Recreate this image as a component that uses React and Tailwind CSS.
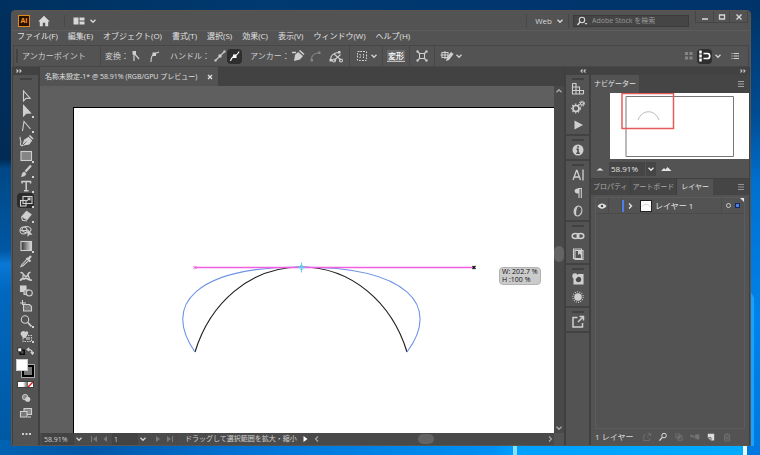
import clsx from 'clsx';

const menus = [
  'ファイル(F)',
  '編集(E)',
  'オブジェクト(O)',
  '書式(T)',
  '選択(S)',
  '効果(C)',
  '表示(V)',
  'ウィンドウ(W)',
  'ヘルプ(H)',
];

const Icon = ({ children, className = 'w-4 h-3.5', box = '0 0 16 14' }) => (
  <svg viewBox={box} className={clsx('block shrink-0', className)} fill="none" stroke="currentColor" strokeWidth="1.1" aria-hidden="true">
    {children}
  </svg>
);

const Chevron = ({ up }) => (
  <Icon box="0 0 8 8" className="w-2 h-2">
    <path d={up ? 'M1.5 5.2 4 2.8l2.5 2.4' : 'M1.5 2.8 4 5.2l2.5-2.4'} strokeWidth="1.4" />
  </Icon>
);

const Lines = () => (
  <Icon box="0 0 8 8" className="w-2 h-2">
    <path d="M1 1.5h6M1 4h6M1 6.5h6" strokeWidth="0.8" />
  </Icon>
);

const Divider = () => <div className="w-px self-stretch bg-[#484848] shrink-0" />;

const Grip = () => <div className="w-3 h-0.5 mx-auto bg-[#414141]" />;

const tools = [
  { label: '選択ツール', art: <path d="M5.5 2v10l2.6-2.6 4-.2z" /> },
  { label: 'ダイレクト選択ツール', more: true, art: <path d="M5.5 1.5v10.5l2.7-2.8 4.3-.2z" fill="currentColor" /> },
  { label: 'アンカーポイントツール', more: true, art: <path d="M4.5 12 6 2.5l6.5 7.5" /> },
  {
    label: '曲線ツール',
    art: (
      <>
        <path d="M2.5 3c-2 2 2 4 0 6.5-.5 1 .5 2.5 2.5 2" />
        <path d="m5 11 1.5-5 4-2.5 3 3-2.5 3.5z" fill="currentColor" />
        <path d="m11.5 1.5 3.5 3.5" strokeWidth="1.6" />
        <path d="m5 11 3.5-3.5" stroke="#535353" strokeWidth="0.8" />
      </>
    ),
  },
  { label: '長方形ツール', more: true, art: <rect x="3" y="2.5" width="10.5" height="9" fill="#858585" /> },
  {
    label: 'ブラシツール',
    more: true,
    art: (
      <>
        <path d="m7.5 7.5 5.5-6" strokeWidth="2.2" />
        <path d="M3 12.5c1.5-.5.5-4 3-4.5 1.5 0 2.5 1.5 1.5 3-1 1.3-3 1.5-4.5 1.5z" fill="currentColor" strokeWidth="0.5" />
      </>
    ),
  },
  {
    label: '文字ツール',
    more: true,
    art: <path d="M4 4.5V2.5h8.5v2M8.2 2.5v9M6 11.7h4.5" strokeWidth="1.5" />,
  },
  {
    label: '拡大・縮小ツール',
    more: true,
    active: true,
    art: (
      <>
        <rect x="2.5" y="6.5" width="5.5" height="5.5" />
        <rect x="5" y="2.5" width="9" height="7" />
        <path d="m8.5 7 3.5-3M9.5 4h2.5v2.5" />
      </>
    ),
  },
  {
    label: '消しゴムツール',
    more: true,
    art: (
      <>
        <path d="m3.5 7.5 5-5.5 5 3.5-4.5 5.5z" fill="currentColor" strokeWidth="0.6" />
        <path d="m3.5 8 1 3.2 4.5.8" />
      </>
    ),
  },
  {
    label: 'シェイプ形成ツール',
    art: (
      <>
        <circle cx="5.5" cy="6.5" r="3.5" />
        <ellipse cx="8.5" cy="5.5" rx="4.5" ry="3" />
        <path d="M2.5 6.5h7" />
        <path d="M9.5 5v8l2-2.2 3-.1z" fill="currentColor" stroke="none" />
      </>
    ),
  },
  { label: 'グラデーションツール', more: true, art: <rect x="3" y="2.5" width="10.5" height="9" fill="url(#toolGradient)" /> },
  {
    label: 'スポイトツール',
    art: (
      <>
        <path d="m8.5 4 4 3.5M10 5.5l3-3.5" strokeWidth="2.2" />
        <path d="M9 5 4 10.5l-1 2 2-.8 5.5-5" />
      </>
    ),
  },
  {
    label: 'パペットワープツール',
    art: (
      <>
        <path d="M2.5 4c2.5-2 3 3.5 5.5 3.5s1.5-5 4.5-4" strokeWidth="1.5" />
        <path d="M2.5 12c.5-4 3-1 4.5-2.5 1.5-1.5 3 2.5 7 1.5" strokeWidth="1.8" />
        <path d="M5 6v3.5M10 6l1.5 4" strokeWidth="1.3" />
      </>
    ),
  },
  {
    label: 'ブレンドツール',
    art: (
      <>
        <rect x="2.5" y="2" width="5.5" height="5.5" fill="currentColor" />
        <path d="M6 6h4.5v4.5H6z" fill="#8a8a8a" />
        <circle cx="11.3" cy="9" r="3" fill="#535353" />
      </>
    ),
  },
  {
    label: 'アートボードツール',
    art: (
      <>
        <path d="M4.5 1v5M2 4h6" />
        <path d="M5.5 5.5h6l2 2v4.5h-8z" fill="#777" />
      </>
    ),
  },
  {
    label: 'ズームツール',
    more: true,
    art: (
      <>
        <circle cx="7" cy="5.5" r="3.7" />
        <path d="m9.8 8.5 3.7 4" strokeWidth="1.8" />
      </>
    ),
  },
  {
    label: 'シンボルツール',
    more: true,
    art: (
      <>
        <path d="M5 6.5h8.5v6H5z" strokeDasharray="1.5 1" />
        <path d="M2.5 5c0-3 4-4 4.5-2 2-2 4 0 3 2l-2.5 4H5z" fill="currentColor" stroke="none" />
        <path d="M8 8h4v3H8z" fill="#999" stroke="none" />
      </>
    ),
  },
];

const dockGroups = [
  [
    {
      label: 'スウォッチ',
      art: <path d="M2.5 1.5h3.5v10.5M2.5 1.5V12h11M2.5 5h7v7M2.5 8.5h11V12M9.5 8.5V5" />,
    },
    {
      label: 'ブラシ設定',
      art: (
        <>
          <circle cx="6" cy="8.5" r="3" strokeWidth="1.7" />
          <circle cx="6" cy="8.5" r="4.3" strokeDasharray="1.5 1.6" strokeWidth="1.2" />
          <circle cx="12" cy="3.5" r="1.5" strokeWidth="1.2" />
          <circle cx="12" cy="3.5" r="2.5" strokeDasharray="1 1" />
        </>
      ),
    },
    { label: 'アクション', art: <path d="M4.5 2.5v9l8.5-4.5z" fill="currentColor" stroke="none" /> },
  ],
  [
    {
      label: '情報',
      art: (
        <>
          <circle cx="8" cy="7" r="5.5" fill="currentColor" stroke="none" />
          <path d="M8 3v1.7M6.5 6.2H8v4M6.3 10.3h3.5" stroke="#4b4b4b" strokeWidth="1.6" />
        </>
      ),
    },
  ],
  [
    { label: '文字', art: <path d="M3 12 6.5 2.5h.5L10.5 12M4.3 9h5M13 1.5v11" strokeWidth="1.3" /> },
    {
      label: '段落',
      art: (
        <>
          <path d="M9 2.5v9.5M11.3 2.5v9.5M12 2.5H8" />
          <path d="M9 2.5H7.5c-3.8 0-3.8 5 0 5H9z" fill="currentColor" stroke="none" />
        </>
      ),
    },
    {
      label: 'OpenType',
      art: (
        <>
          <ellipse cx="8" cy="7" rx="3.8" ry="5" transform="rotate(15 8 7)" />
          <path d="M8 2C4 3 3 10.5 6.5 12c-.8-3-.3-7 1.5-10z" fill="currentColor" stroke="none" />
        </>
      ),
    },
  ],
  [
    {
      label: 'リンク',
      art: (
        <>
          <ellipse cx="5.5" cy="7" rx="3.3" ry="2.5" strokeWidth="1.5" />
          <ellipse cx="10.5" cy="7" rx="3.3" ry="2.5" strokeWidth="1.5" />
        </>
      ),
    },
    {
      label: 'CC ライブラリ',
      art: (
        <>
          <path d="M3.5 2h8v9.5h-8zM5 3.5h8V12.5H5z" />
          <path d="M8 3h3v5L9.5 6.8 8 8z" fill="currentColor" stroke="none" />
        </>
      ),
    },
  ],
  [
    {
      label: '透明',
      art: (
        <>
          <path d="M4 6v6h9V2.5H8" fill="currentColor" />
          <circle cx="8.5" cy="7.5" r="2.7" fill="#4b4b4b" stroke="none" />
          <circle cx="5" cy="4" r="2.7" fill="currentColor" stroke="none" />
        </>
      ),
    },
    {
      label: 'アピアランス',
      art: (
        <>
          <circle cx="8" cy="7" r="3.8" fill="currentColor" stroke="none" />
          <circle cx="8" cy="7" r="5.2" strokeDasharray="1 1.3" />
        </>
      ),
    },
  ],
  [
    {
      label: 'アセットの書き出し',
      art: <path d="M7.5 2.5H3v9.5h9.5V8M8 7l5-5M9.5 1.5H13.5v4" strokeWidth="1.5" />,
    },
  ],
];

const layerActions = [
  { label: 'アセットの書き出し', art: <path d="M6 4H3.5v8h8V9M8 7l4.5-4.5M9 2h4v4" /> },
  {
    label: 'オブジェクトの位置',
    on: true,
    art: (
      <>
        <circle cx="9.5" cy="5" r="3.2" strokeWidth="1.4" />
        <path d="m7 7.5-4 4.5" strokeWidth="1.8" />
      </>
    ),
  },
  { label: 'クリッピングマスクを作成', art: <path d="M3.5 2.5h6v6h-6zM6.5 5.5h6v6h-6zM6.5 5.5h3v3h-3z" /> },
  { label: '新規サブレイヤーを作成', art: <path d="M2 3.5v3h5M5 4.5l2 2-2 2M8.5 4h5v6l-5-1z" fill="currentColor" /> },
  {
    label: '新規レイヤーを作成',
    on: true,
    art: (
      <>
        <path d="M3.5 2.5h9v9.5H8L3.5 8z" fill="currentColor" stroke="none" />
        <path d="M4 8h4v3.5" stroke="#4b4b4b" />
      </>
    ),
  },
  { label: '削除', art: <path d="M3.5 4h9M6.5 4V2.5h3V4M4.5 4v8.5h7V4M6.5 6v4.5M8 6v4.5M9.5 6v4.5" /> },
];

const Wallpaper = () => (
  <svg className="absolute inset-0 w-full h-full" viewBox="0 0 760 455" preserveAspectRatio="none" aria-hidden="true">
    <defs>
      <linearGradient id="skyLeft" x1="0" y1="0" x2="0" y2="1">
        <stop offset="0" stopColor="#00305f" />
        <stop offset="0.35" stopColor="#002b55" />
        <stop offset="0.37" stopColor="#004886" />
        <stop offset="0.55" stopColor="#0057a3" />
        <stop offset="0.58" stopColor="#0a78d6" />
        <stop offset="0.64" stopColor="#0068c0" />
        <stop offset="1" stopColor="#0057a0" />
      </linearGradient>
      <linearGradient id="skyRight" x1="0" y1="0" x2="0" y2="1">
        <stop offset="0" stopColor="#003263" />
        <stop offset="0.25" stopColor="#004c92" />
        <stop offset="0.4" stopColor="#0070cf" />
        <stop offset="0.7" stopColor="#0082ea" />
        <stop offset="1" stopColor="#0078e0" />
      </linearGradient>
      <linearGradient id="skyTop">
        <stop offset="0" stopColor="#00305f" />
        <stop offset="0.35" stopColor="#003a70" />
        <stop offset="1" stopColor="#00336a" />
      </linearGradient>
      <linearGradient id="skyBottom">
        <stop offset="0" stopColor="#0062b2" />
        <stop offset="0.12" stopColor="#0057a8" />
        <stop offset="0.3" stopColor="#0070d2" />
        <stop offset="0.66" stopColor="#0090f5" />
        <stop offset="0.69" stopColor="#00a0ff" />
        <stop offset="0.97" stopColor="#00aaff" />
      </linearGradient>
    </defs>
    <rect width="380" height="455" fill="url(#skyLeft)" />
    <rect x="380" width="380" height="455" fill="url(#skyRight)" />
    <rect width="760" height="11" fill="url(#skyTop)" />
    <rect y="440" width="745" height="15" fill="url(#skyBottom)" />
    <rect x="513" y="440" width="4" height="15" fill="#8be0ff" />
    <rect x="743" y="440" width="4" height="15" fill="#e8fbff" />
    <path d="M751 292l3 6v148h-3z" fill="#14a4ff" />
  </svg>
);

const TitleBar = () => (
  <header className="flex items-center h-[19px] pl-1.5 text-[#d8d8d8]">
    <div className="flex items-center justify-center w-3 h-3 bg-[#2a1200] border border-[#e08a1e] text-[#f59a23] text-[7px] leading-none font-bold">
      Ai
    </div>
    <button type="button" aria-label="ホーム" className="ml-2">
      <Icon className="w-3 h-3" box="0 0 12 12">
        <path d="M6 .8.2 6.5h1.6v4.8h3V7.8h2.4v3.5h3V6.5h1.6z" fill="currentColor" stroke="none" />
      </Icon>
    </button>
    <div className="w-px h-3 ml-3.5 bg-[#484848]" />
    <button type="button" aria-label="ドキュメントの配置" className="flex items-center gap-1 ml-2">
      <Icon className="w-3 h-3" box="0 0 12 12">
        <path d="M.5 2.5h5v7h-5zM6.5 2.5h5v3h-5zM6.5 6.5h5v3h-5z" fill="currentColor" stroke="none" />
      </Icon>
      <Chevron />
    </button>
    <div className="flex-1" />
    <div className="w-px h-3.5 bg-[#484848]" />
    <button type="button" className="flex items-center gap-1 pl-2 pr-1 text-[8px] leading-3">
      Web
      <Chevron />
    </button>
    <div className="w-px h-3.5 bg-[#484848]" />
    <label className="flex items-center w-[116px] h-3 ml-1 pl-0.5 gap-1 bg-[#454545] border border-[#3b3b3b]">
      <Icon className="w-3 h-2.5" box="0 0 12 10">
        <circle cx="6" cy="4" r="2.7" />
        <path d="M4 6 1.5 9" strokeWidth="1.4" />
        <path d="M8.5 7h3L10 8.7z" fill="currentColor" stroke="none" />
      </Icon>
      <input
        aria-label="Adobe Stock を検索"
        placeholder="Adobe Stock を検索"
        className="w-full min-w-0 bg-transparent text-[7px] leading-[10px] outline-none placeholder:text-[#999]"
      />
    </label>
    <div className="flex self-start h-3 ml-1.5 mr-0.5 border border-t-0 border-[#464646]">
      <button type="button" aria-label="最小化" className="w-[17px] flex items-center justify-center">
        <Icon box="0 0 8 8" className="w-2 h-2"><path d="M1 6h6" strokeWidth="1.5" /></Icon>
      </button>
      <button type="button" aria-label="最大化" className="w-[17px] flex items-center justify-center border-x border-[#464646]">
        <Icon box="0 0 8 8" className="w-2 h-2"><path d="M1.5 2h5v4h-5z" strokeWidth="1.3" /></Icon>
      </button>
      <button type="button" aria-label="閉じる" className="w-[17px] flex items-center justify-center">
        <Icon box="0 0 8 8" className="w-2 h-2"><path d="m1.5 1.5 5 5m0-5-5 5" strokeWidth="1.4" /></Icon>
      </button>
    </div>
  </header>
);

const MenuBar = () => (
  <nav className="flex items-center h-[15px] pl-[5px] pb-1 gap-2.5 border-t border-[#5d5d5d] text-[8px] leading-3 text-[#e2e2e2]">
    {menus.map((menu) => (
      <button key={menu} type="button" className="shrink-0">
        {menu}
      </button>
    ))}
  </nav>
);

const ToolButton = ({ label, active, children, className = 'w-[15px]' }) => (
  <button
    type="button"
    aria-label={label}
    className={clsx('flex items-center justify-center h-[15px] shrink-0', className, active && 'bg-[#2e2e2e] rounded-sm text-white')}
  >
    {children}
  </button>
);

const ControlBar = () => (
  <div className="flex items-center h-[22px] mx-px px-0.5 border border-[#474747] text-[8px] leading-3 text-[#cfcfcf]">
    <div className="w-0.5 h-3.5 bg-[#434343]" />
    <span className="ml-1 w-[78px] shrink-0">アンカーポイント</span>
    <Divider />
    <span className="ml-1 w-6 shrink-0">変換：</span>
    <ToolButton label="コーナーポイントに切り換え">
      <Icon>
        <path d="M5 4v8M5 4l5 6" strokeWidth="1.2" />
        <path d="M3.5 2h3.5v3.5H3.5z" fill="currentColor" stroke="none" />
      </Icon>
    </ToolButton>
    <ToolButton label="スムーズポイントに切り換え" className="w-[22px]">
      <Icon>
        <path d="M4 13c0-4 1-7 3-8l5-2" />
        <path d="M5.5 3.5H9V7H5.5z" fill="currentColor" stroke="none" />
      </Icon>
    </ToolButton>
    <span className="ml-1 w-[42px] shrink-0">ハンドル：</span>
    <ToolButton label="ハンドルを表示">
      <Icon>
        <path d="m3.5 11.5 9-9" />
        <path d="M6.5 5.5h3v3h-3zM2.5 10.5h2v2h-2zM11.5 1.5h2v2h-2z" fill="currentColor" stroke="none" />
      </Icon>
    </ToolButton>
    <ToolButton label="ハンドルを隠す" active>
      <Icon>
        <path d="M3.5 12c.5-2.5 2-4 4-5s4-2 4.5-4.5" />
        <path d="M6 5.5h3.5V9H6z" fill="currentColor" stroke="none" />
      </Icon>
    </ToolButton>
    <span className="ml-2 w-10 shrink-0">アンカー：</span>
    <ToolButton label="アンカーポイントを削除">
      <Icon>
        <path d="m4 12 1-6 3-3 5 4-3 3.5z" fill="currentColor" stroke="none" />
        <path d="m9.5 1.5 4.5 4M2 3.5h4" strokeWidth="1.6" />
      </Icon>
    </ToolButton>
    <ToolButton label="アンカーポイントを連結" className="w-[22px] text-[#858585]">
      <Icon>
        <path d="M3.5 10.5c0-4 2-6 6.5-6.5" />
        <path d="M2.5 10h2.5v2.5H2.5zM10 2.5h2.5V5H10z" fill="currentColor" stroke="none" />
      </Icon>
    </ToolButton>
    <ToolButton label="アンカーポイントでパスをカット" className="w-[18px]">
      <Icon>
        <path d="M2.5 11c0-4 3-7 8-7.5M6 5l7 6M12.5 5.5 6 11.5" />
        <circle cx="13" cy="11.5" r="1.5" />
        <circle cx="6" cy="11.5" r="1.5" />
        <path d="M1.5 10H4v2.5H1.5zM10 2h2.5v2.5H10z" fill="currentColor" stroke="none" />
      </Icon>
    </ToolButton>
    <div className="w-1" />
    <Divider />
    <ToolButton label="整列" className="w-8">
      <Icon>
        <path d="M3.5 2.5h9v9h-9z" strokeDasharray="1.5 1.5" />
        <path d="M6 2v10M3 7h10M9.5 2v10" strokeDasharray="1 2" />
      </Icon>
      <Chevron />
    </ToolButton>
    <Divider />
    <button type="button" className="mx-1 px-px h-3 bg-[#686868] shrink-0 font-medium text-white border-b border-[#bdbdbd]">変形</button>
    <Divider />
    <ToolButton label="選択オブジェクトを編集モードで分離" className="w-6">
      <Icon>
        <path d="M5.5 4.5h5v5h-5zM3 2l3 3m7-3-3 3M3 12l3-3m7 3-3-3" />
        <path d="M2.5 1.5h2v2h-2zM11.5 1.5h2v2h-2zM2.5 10.5h2v2h-2zM11.5 10.5h2v2h-2z" fill="currentColor" stroke="none" />
      </Icon>
    </ToolButton>
    <Divider />
    <ToolButton label="共通オブジェクトを選択" className="w-8">
      <Icon>
        <path d="M3 3.5h6v5H3zM6 2v8M1.5 6H9" />
        <path d="m7 12 1-4 4-5 2.5 2L10 11z" fill="currentColor" stroke="none" />
      </Icon>
      <Chevron />
    </ToolButton>
    <div className="flex-1" />
    <ToolButton label="ピクセルグリッドに整合" className="w-4 text-[#858585]">
      <Icon>
        <path d="M4.5 3.5h2v2h-2zM9 3.5h2v2H9zM4.5 8h2v2h-2zM9 8h2v2H9z" fill="currentColor" />
      </Icon>
    </ToolButton>
    <ToolButton label="スナップ" active>
      <Icon>
        <path d="M3.5 1.5v11" strokeWidth="2.5" strokeDasharray="3 1" />
        <path d="M6.5 4.5h4c3 0 3 5 0 5h-4" strokeWidth="1.7" />
      </Icon>
    </ToolButton>
    <ToolButton label="スナップのオプション" className="w-3">
      <Chevron />
    </ToolButton>
    <ToolButton label="コントロールのメニュー" className="w-[22px]">
      <Icon className="w-2.5 h-2.5" box="0 0 10 10">
        <path d="M3.5 2.5H9M3.5 5H9M3.5 7.5H9M1.5 2.5h1M1.5 5h1M1.5 7.5h1" />
      </Icon>
    </ToolButton>
  </div>
);

const DoubleArrow = ({ left }) => (
  <Icon box="0 0 8 6" className="w-2 h-1.5">
    <path d={left ? 'M3.5 1.5 2 3l1.5 1.5M6.5 1.5 5 3l1.5 1.5' : 'M1.5 1.5 3 3 1.5 4.5M4.5 1.5 6 3 4.5 4.5'} />
  </Icon>
);

const Toolbar = () => (
  <aside className="flex flex-col w-[25px] shrink-0 bg-[#535353] text-[#cfcfcf]">
    <button type="button" aria-label="ツールバーを展開" className="flex items-center h-2 pl-0.5 bg-[#424242]">
      <DoubleArrow />
    </button>
    <div className="pt-[3px] pb-2">
      <Grip />
    </div>
    <div className="flex flex-col items-center">
      {tools.map((tool) => (
        <button
          key={tool.label}
          type="button"
          aria-label={tool.label}
          className={clsx('relative flex items-center justify-center w-[17px] h-[15px]', tool.active && 'bg-[#2b2b2b] rounded-sm')}
        >
          <Icon>{tool.art}</Icon>
          {tool.more && <span className="absolute right-0 bottom-0 w-0.5 h-0.5 bg-[#d0d0d0]" />}
        </button>
      ))}
    </div>
    <div className="flex justify-between px-1 pt-1">
      <button type="button" aria-label="初期設定の塗りと線">
        <Icon box="0 0 10 10" className="w-2 h-2">
          <path d="M4 4h5v5H4z" stroke="#111" strokeWidth="2" />
          <path d="M1 1h5v5H1z" fill="#fff" stroke="#222" />
        </Icon>
      </button>
      <button type="button" aria-label="塗りと線を入れ替え">
        <Icon box="0 0 10 10" className="w-2 h-2">
          <path d="M2 3c4 0 6 2 6 5M4 1 1.5 3 4 5M6 6.5 8 9l2-2.5" strokeWidth="1.5" />
        </Icon>
      </button>
    </div>
    <div className="relative h-[18px] mx-[3px] mt-1">
      <button type="button" aria-label="線" className="absolute left-1.5 top-1.5 w-3 h-3 border-2 border-black outline outline-[#aaa] bg-[#777]" />
      <button type="button" aria-label="塗り" className="absolute left-0 top-0 w-3 h-3 bg-white border border-[#ccc]" />
    </div>
    <div className="flex mx-1 mt-1 h-[7px] border border-[#404040]">
      <button type="button" aria-label="カラー" className="flex-1 bg-white" />
      <button type="button" aria-label="グラデーション" className="flex-1 bg-linear-to-r from-white to-[#555]" />
      <button type="button" aria-label="なし" className="flex-1 bg-white">
        <svg viewBox="0 0 6 6" className="w-full h-full block" preserveAspectRatio="none">
          <path d="M0 6 6 0" stroke="#e01a1a" strokeWidth="1.8" />
        </svg>
      </button>
    </div>
    <button type="button" aria-label="描画方法" className="mx-auto mt-1">
      <Icon className="w-3 h-3" box="0 0 14 14">
        <circle cx="6" cy="6" r="3.2" fill="#888" />
        <circle cx="9" cy="8.5" r="3" fill="currentColor" stroke="none" />
      </Icon>
    </button>
    <button type="button" aria-label="スクリーンモードを変更" className="mx-auto mt-0.5">
      <Icon>
        <path d="M6 2.5h7.5v6H6z" fill="#888" />
        <path d="M2.5 5.5H9v5.5H2.5z" fill="#777" />
        <path d="M10 11h3" />
      </Icon>
    </button>
    <button type="button" aria-label="ツールバーを編集" className="mx-auto mt-auto pb-1">
      <Icon>
        <path d="M4 7h2M7.5 7h2M11 7h2" strokeWidth="1.8" />
      </Icon>
    </button>
  </aside>
);

const Artwork = () => (
  <svg className="block max-w-none w-[480px] h-[325px]" viewBox="74 108 480 325" fill="none">
    <path d="M195 352C210 303 250 267 301 267s91 36 106 85" stroke="#222" strokeWidth="1.2" />
    <path d="M195 352C162 305 195 267 301 267s141 38 106 85" stroke="#6f94e4" strokeWidth="1.1" />
    <path d="M195 267.5H474" stroke="#f25fe2" strokeWidth="1.3" />
    <path d="m193.5 266 3 3m0-3-3 3" stroke="#f05adc" />
    <path d="m472.5 266 3 3m0-3-3 3" stroke="#111" strokeWidth="1.3" />
    <path d="M301.5 262.5v10M298 267.5h7" stroke="#5fd0f5" />
    <path d="m301.5 264.5 2.5 3-2.5 3-2.5-3z" stroke="#5fd0f5" strokeWidth="0.8" />
  </svg>
);

const StatusBar = () => (
  <footer className="flex items-center h-3 text-[7px] leading-[10px] text-[#cfcfcf] bg-[#4b4b4b]">
    <input aria-label="ズーム" defaultValue="58.91%" className="w-8 h-full ml-0.5 pl-0.5 bg-[#434343] outline-none" />
    <button type="button" aria-label="ズームの一覧" className="flex justify-center w-2.5"><Chevron /></button>
    <div className="flex gap-1 pl-1.5 w-7 text-[#7a7a7a]">
      <button type="button" aria-label="最初">
        <Icon box="0 0 8 8" className="w-2 h-2"><path d="M1.5 1v6" /><path d="M7 1v6L3 4z" fill="currentColor" stroke="none" /></Icon>
      </button>
      <button type="button" aria-label="前へ">
        <Icon box="0 0 8 8" className="w-2 h-2"><path d="M5 1v6L1.5 4z" fill="currentColor" stroke="none" /></Icon>
      </button>
    </div>
    <input aria-label="アートボード" defaultValue="1" className="w-[26px] h-full pl-0.5 bg-[#434343] outline-none" />
    <button type="button" aria-label="アートボードの一覧" className="flex justify-center w-2.5"><Chevron /></button>
    <div className="flex gap-1 pl-1.5 w-7 text-[#7a7a7a]">
      <button type="button" aria-label="次へ">
        <Icon box="0 0 8 8" className="w-2 h-2"><path d="M2 1v6l4-3z" fill="currentColor" stroke="none" /></Icon>
      </button>
      <button type="button" aria-label="最後">
        <Icon box="0 0 8 8" className="w-2 h-2"><path d="M6.5 1v6" /><path d="M1 1v6l4-3z" fill="currentColor" stroke="none" /></Icon>
      </button>
    </div>
    <Divider />
    <span className="pl-2 w-[124px] shrink-0 whitespace-nowrap">ドラッグして選択範囲を拡大・縮小</span>
    <button type="button" aria-label="ステータスの一覧" className="text-white">
      <Icon box="0 0 8 8" className="w-2 h-2"><path d="M2.5 1v6l4-3z" fill="currentColor" stroke="none" /></Icon>
    </button>
    <div className="flex flex-1 items-center justify-between h-full pl-1 bg-[#494949] text-[#aaa]">
      <button type="button" aria-label="左へスクロール">
        <Icon box="0 0 8 8" className="w-2 h-2"><path d="M5 1.5 2.5 4 5 6.5" /></Icon>
      </button>
      <div className="w-4 h-2.5 mr-4 rounded-full bg-[#646464]" />
      <button type="button" aria-label="右へスクロール">
        <Icon box="0 0 8 8" className="w-2 h-2"><path d="M3 1.5 5.5 4 3 6.5" /></Icon>
      </button>
    </div>
    <div className="w-2.5 h-full bg-[#535353]" />
  </footer>
);

const Document = () => (
  <main className="flex flex-col flex-1 min-w-0">
    <div className="flex h-[19px] bg-[#424242]">
      <div className="flex items-center justify-between w-[178px] pl-[5px] pr-1 bg-[#535353] text-[7px] leading-3 text-[#e0e0e0]">
        <span className="whitespace-nowrap">名称未設定-1* @ 58.91% (RGB/GPU プレビュー)</span>
        <button type="button" aria-label="タブを閉じる">
          <Icon box="0 0 8 8" className="w-2 h-2"><path d="m2 2 4 4m0-4L2 6" strokeWidth="1.3" /></Icon>
        </button>
      </div>
    </div>
    <div className="flex flex-1 min-h-0">
      <div className="relative flex flex-1 min-w-0 pt-[21px] pl-[33px] overflow-hidden bg-[#5f5f5f]">
        <div className="flex-1 min-w-0 overflow-hidden bg-white border-t border-l border-black">
          <Artwork />
        </div>
        <div className="absolute left-[459px] top-[181px] px-0.5 bg-[#cbcbcb] border border-[#b3b3b3] rounded-sm text-[7px] leading-2 font-medium text-[#111] whitespace-nowrap">
          <div>W: 202.7 %</div>
          <div>H :100 %</div>
        </div>
      </div>
      <div className="flex flex-col items-center justify-between w-2.5 py-px bg-[#494949] text-[#aaa]">
        <button type="button" aria-label="上へスクロール"><Chevron up /></button>
        <div className="w-2.5 h-4 mb-3 rounded-full bg-[#646464]" />
        <button type="button" aria-label="下へスクロール"><Chevron /></button>
      </div>
    </div>
    <StatusBar />
  </main>
);

const Dock = () => (
  <aside className="flex flex-col w-[23px] shrink-0 bg-[#535353] text-[#cfcfcf]">
    <button type="button" aria-label="パネルを展開" className="flex items-center justify-end h-2 pr-0.5 bg-[#424242]">
      <DoubleArrow left />
    </button>
    {dockGroups.map((group, index) => (
      <div key={index} className="flex flex-col items-center pt-[3px] border-b-2 border-[#424242]">
        <Grip />
        {group.map((panel) => (
          <button key={panel.label} type="button" aria-label={panel.label} className="flex items-center justify-center w-full h-[18px]">
            <Icon>{panel.art}</Icon>
          </button>
        ))}
      </div>
    ))}
  </aside>
);

const Navigator = () => (
  <section>
    <div className="flex items-stretch h-[18px] bg-[#454545] text-[7px] leading-3">
      <div className="flex items-center px-[3px] bg-[#535353] text-[#e4e4e4] whitespace-nowrap">ナビゲーター</div>
      <button type="button" aria-label="ナビゲーターのメニュー" className="ml-auto pr-1">
        <Lines />
      </button>
    </div>
    <div className="pl-[19px] h-[66px]">
      <svg viewBox="0 0 139 66" preserveAspectRatio="none" className="block w-full h-full bg-white" fill="none">
        <path d="M16 3.5h107.5v60H16z" stroke="#777" />
        <path d="M28 27c4-11 17-11 21 0" stroke="#bbb" />
        <path d="M12 .5h51.5v35H12z" stroke="#e85a5a" strokeWidth="1.5" />
      </svg>
    </div>
    <div className="flex items-center h-[19px] pl-1 text-[8px] leading-3 text-[#e4e4e4]">
      <button type="button" aria-label="ズームアウト">
        <Icon box="0 0 10 8" className="w-2.5 h-2"><path d="M1.5 5.5 5 3l3.5 2.5z" fill="currentColor" stroke="none" /></Icon>
      </button>
      <input aria-label="表示倍率" defaultValue="58.91%" className="w-9 h-3.5 ml-1 pl-0.5 bg-[#454545] outline-none" />
      <button type="button" aria-label="表示倍率の一覧" className="flex items-center justify-center w-2.5 h-3.5 ml-px bg-[#454545]">
        <Chevron />
      </button>
      <button type="button" aria-label="ズームイン" className="ml-1">
        <Icon box="0 0 12 8" className="w-3 h-2"><path d="M1 6l3-3 1.5 1.5L7.5 2 11.5 6z" fill="currentColor" stroke="none" /></Icon>
      </button>
    </div>
  </section>
);

const Layers = () => (
  <section className="flex flex-col flex-1 min-h-0 border-t border-[#404040]">
    <div className="flex items-stretch h-4 bg-[#454545] text-[7px] leading-3 text-[#a8a8a8] whitespace-nowrap">
      <button type="button" className="px-0.5 border-r border-[#3d3d3d]">プロパティ</button>
      <button type="button" className="px-0.5 border-r border-[#3d3d3d]">アートボード</button>
      <button type="button" className="px-1 bg-[#535353] text-[#e4e4e4]">レイヤー</button>
      <button type="button" aria-label="レイヤーのメニュー" className="ml-auto pr-1">
        <Lines />
      </button>
    </div>
    <div className="flex-1 mt-0.5 mx-1 border border-[#5c5c5c]">
      <div className="flex items-center h-4 border-b border-[#4a4a4a] text-[8px] leading-3 text-[#e4e4e4]">
        <button type="button" aria-label="表示の切り換え" className="flex justify-center w-3">
          <Icon box="0 0 10 8" className="w-2.5 h-2">
            <path d="M.5 4C3 .5 7 .5 9.5 4 7 7.5 3 7.5.5 4z" fill="currentColor" stroke="none" />
            <circle cx="5" cy="4" r="1.3" fill="#4b4b4b" stroke="none" />
          </Icon>
        </button>
        <button type="button" aria-label="ロックの切り換え" className="w-3.5 h-full border-x border-[#4a4a4a]" />
        <div className="w-0.5 h-3 bg-[#4f7fe8]" />
        <button type="button" aria-label="レイヤーを展開" className="ml-0.5">
          <Icon box="0 0 8 8" className="w-2 h-2"><path d="M3 1.5 5.5 4 3 6.5" strokeWidth="1.4" /></Icon>
        </button>
        <svg viewBox="0 0 12 12" className="w-3 h-3 ml-1.5 bg-white border border-[#222]" fill="none">
          <path d="M1 7c2-4 8-4 10 0" stroke="#ccc" />
        </svg>
        <span className="ml-[3px] whitespace-nowrap">レイヤー 1</span>
        <div className="ml-auto flex items-center self-stretch pl-1 border-l border-[#4a4a4a]">
          <button type="button" aria-label="ターゲット" className="w-[5px] h-[5px] rounded-full border border-[#ccc]" />
          <button type="button" aria-label="選択中のアート" className="w-[5px] h-[5px] ml-1 bg-[#4f7fe8] border border-[#14295e]" />
          <svg viewBox="0 0 4 4" className="w-1 h-1 self-start">
            <path d="M0 0h4v4z" fill="#e4e4e4" />
          </svg>
        </div>
      </div>
    </div>
    <div className="flex items-center h-4 pl-1 text-[8px] leading-3 text-[#dcdcdc]">
      <span className="w-11 whitespace-nowrap">1 レイヤー</span>
      {layerActions.map((action) => (
        <button
          key={action.label}
          type="button"
          aria-label={action.label}
          className={clsx('flex items-center justify-center w-4', action.on ? 'text-[#dcdcdc]' : 'text-[#747474]')}
        >
          <Icon className="w-3 h-2.5">{action.art}</Icon>
        </button>
      ))}
    </div>
  </section>
);

export default function App() {
  return (
    <div className="relative flex h-screen pt-2.5 pl-[11px] pr-[9px] pb-[9px] font-['Open_Sans','Noto_Sans_CJK_JP',sans-serif]">
      <Wallpaper />
      <svg className="absolute w-0 h-0" aria-hidden="true">
        <linearGradient id="toolGradient">
          <stop offset="0" stopColor="#333" />
          <stop offset="1" stopColor="#ddd" />
        </linearGradient>
      </svg>
      <div className="relative flex flex-col flex-1 min-w-0 overflow-hidden bg-[#535353] border border-[#5b5550] rounded-t-sm">
        <TitleBar />
        <MenuBar />
        <ControlBar />
        <div className="flex flex-1 min-h-0 px-px gap-0.5 bg-[#404040]">
          <Toolbar />
          <Document />
          <Dock />
          <aside className="flex flex-col w-[158px] shrink-0 bg-[#535353] text-[#bdbdbd]">
            <button type="button" aria-label="パネルを折りたたむ" className="flex items-center justify-end h-2 pr-0.5 bg-[#424242]">
              <DoubleArrow />
            </button>
            <Navigator />
            <Layers />
          </aside>
        </div>
      </div>
    </div>
  );
}
